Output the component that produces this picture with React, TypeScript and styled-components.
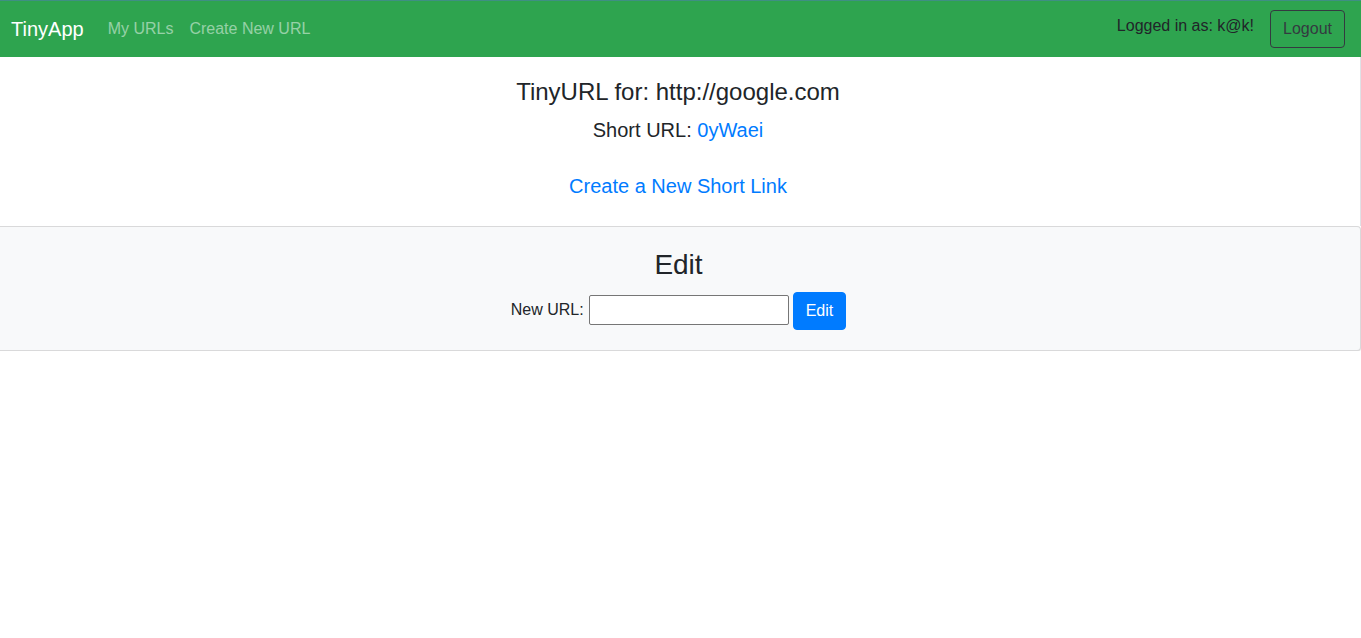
import React from "react";
import styled, { createGlobalStyle } from "styled-components";

const GlobalStyle = createGlobalStyle`
  html, body {
    margin: 0;
    padding: 0;
    background: #ffffff;
    overflow-x: hidden;
  }
  body {
    font-family: "Liberation Sans", Arial, sans-serif;
    font-size: 16px;
    line-height: 1.5;
    color: #212529;
  }
  * { box-sizing: border-box; }
`;

const Navbar = styled.nav`
  display: flex;
  align-items: center;
  height: 57px;
  padding: 0 16px 0 11px;
  background: #2ea44f;
  border-top: 1px solid #3f8f83;
`;

const Brand = styled.a`
  font-size: 20px;
  line-height: 30px;
  padding: 5px 0;
  margin-right: 16px;
  color: #ffffff;
  text-decoration: none;
`;

const NavList = styled.div`
  display: flex;
  flex: 1;
`;

const NavLink = styled.a`
  padding: 8px;
  font-size: 16px;
  line-height: 24px;
  color: rgba(255, 255, 255, 0.5);
  text-decoration: none;
`;

const UserText = styled.span`
  font-size: 16px;
  line-height: 24px;
  color: #212529;
  margin-right: 16px;
  margin-bottom: 7px;
`;

const OutlineButton = styled.button`
  font-family: inherit;
  font-size: 16px;
  line-height: 24px;
  padding: 6px 12px;
  height: 38px;
  background: transparent;
  color: #343a40;
  border: 1px solid #343a40;
  border-radius: 4px;
  cursor: pointer;
`;

const Main = styled.main`
  margin-left: -4px;
  width: 1365px;
`;

const Summary = styled.section`
  display: flex;
  flex-direction: column;
  align-items: center;
  padding-top: 21px;
  padding-bottom: 25px;
  border-right: 1px solid #dee2e6;
`;

const Title = styled.h4`
  margin: 0 0 11px;
  font-size: 24px;
  font-weight: 400;
  line-height: 1.2;
`;

const Subtitle = styled.h5`
  margin: 0 0 29px;
  font-size: 20px;
  font-weight: 400;
  line-height: 1.2;
`;

const Link = styled.a`
  color: #007bff;
  text-decoration: none;
`;

const BigLink = styled(Link)`
  font-size: 20px;
  line-height: 30px;
`;

const Card = styled.section`
  display: flex;
  flex-direction: column;
  align-items: center;
  padding: 21px 20px 20px;
  background: #f8f9fa;
  border: 1px solid rgba(0, 0, 0, 0.125);
  border-radius: 4px;
  box-shadow: 0 1px 1px rgba(0, 0, 0, 0.1);
`;

const CardTitle = styled.h3`
  margin: 0 0 11px;
  font-size: 28px;
  font-weight: 400;
  line-height: 1.2;
`;

const Form = styled.form`
  display: flex;
  align-items: center;
  height: 38px;
`;

const Label = styled.label`
  font-size: 16px;
  line-height: 24px;
  margin: 0 5px 2px 0;
`;

const Input = styled.input`
  width: 200px;
  height: 30px;
  margin: 0 4px 2px 0;
  padding: 1px 2px;
  font-family: inherit;
  font-size: 13px;
  background: #ffffff;
  border: 1px solid #767676;
  border-radius: 2px;
`;

const PrimaryButton = styled.button`
  font-family: inherit;
  font-size: 16px;
  line-height: 24px;
  height: 38px;
  padding: 6px 12px;
  background: #007bff;
  color: #ffffff;
  border: 1px solid #007bff;
  border-radius: 4px;
  cursor: pointer;
`;

export default function App() {
  return (
    <>
      <GlobalStyle />
      <Navbar>
        <Brand href="#">TinyApp</Brand>
        <NavList>
          <NavLink href="#">My URLs</NavLink>
          <NavLink href="#">Create New URL</NavLink>
        </NavList>
        <UserText>Logged in as: k@k!</UserText>
        <OutlineButton type="button">Logout</OutlineButton>
      </Navbar>
      <Main>
        <Summary>
          <Title>TinyURL for: http://google.com</Title>
          <Subtitle>
            Short URL: <Link href="#">0yWaei</Link>
          </Subtitle>
          <BigLink href="#">Create a New Short Link</BigLink>
        </Summary>
        <Card>
          <CardTitle>Edit</CardTitle>
          <Form onSubmit={(e) => e.preventDefault()}>
            <Label htmlFor="newurl">New URL:</Label>
            <Input id="newurl" type="text" />
            <PrimaryButton type="submit">Edit</PrimaryButton>
          </Form>
        </Card>
      </Main>
    </>
  );
}
